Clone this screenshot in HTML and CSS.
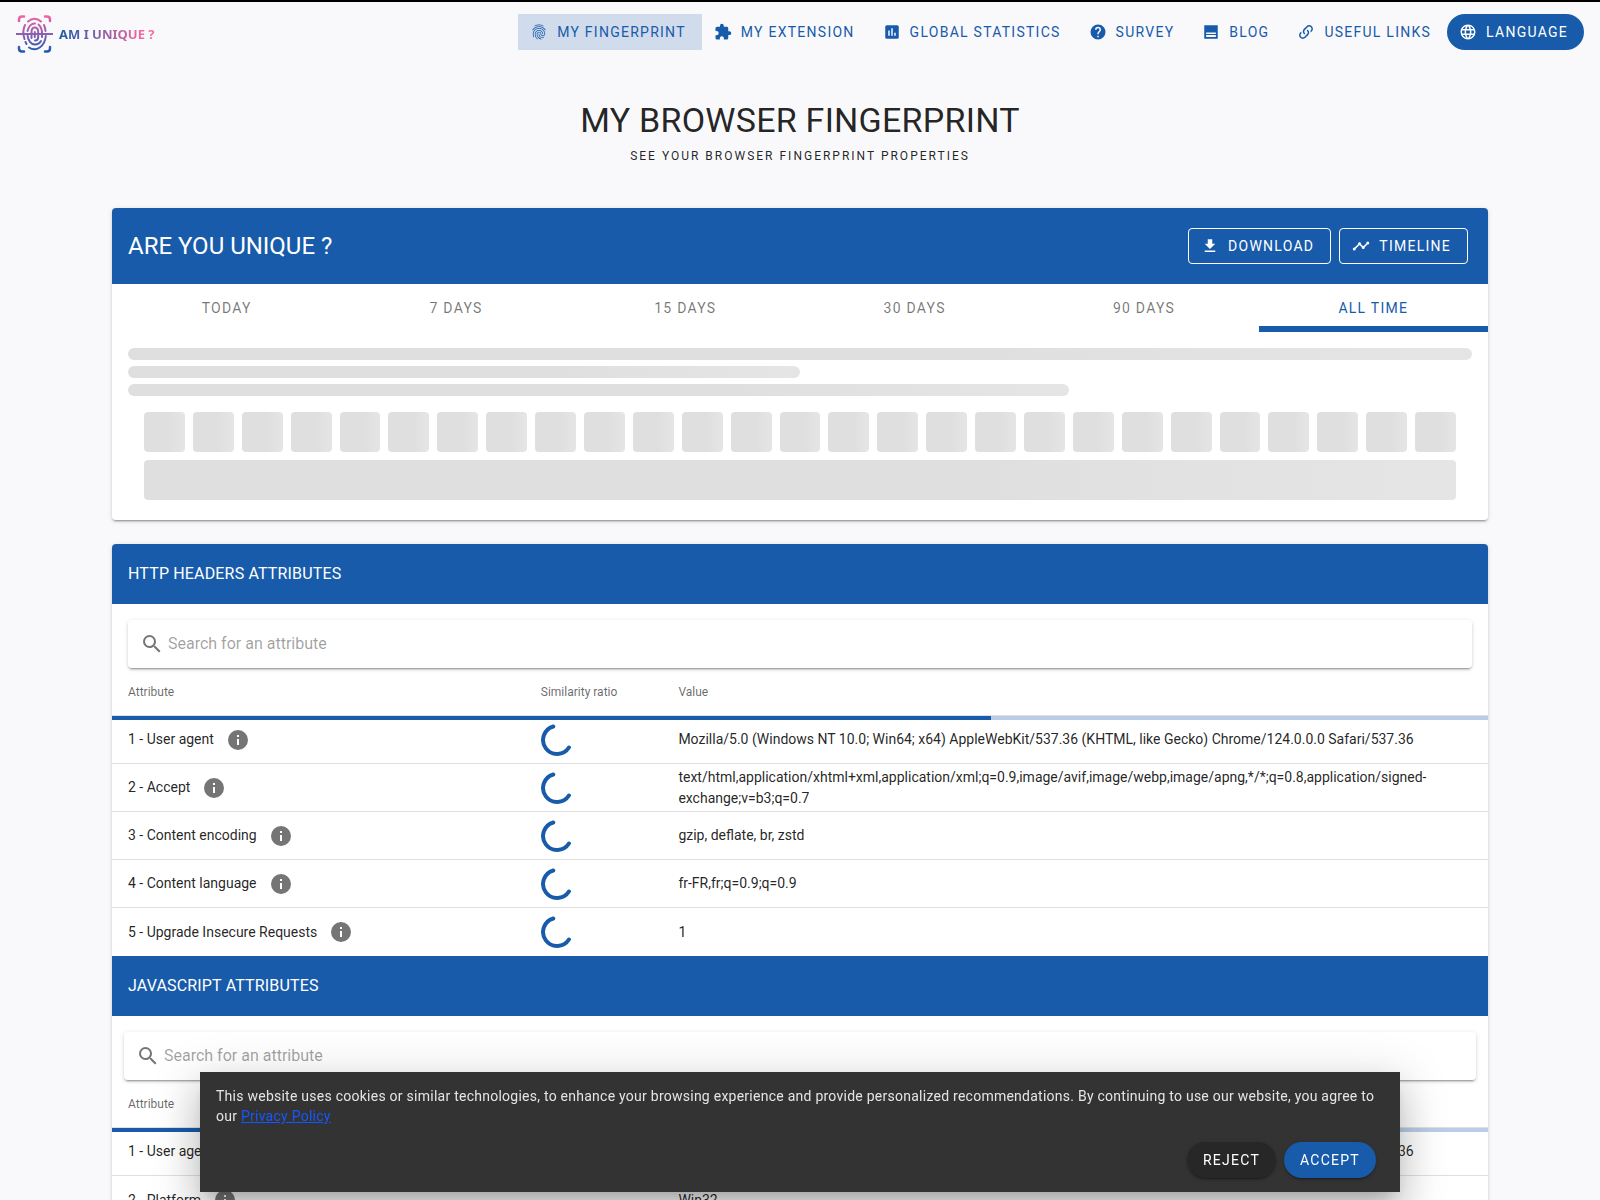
FILE: index.html
```html
<!DOCTYPE html>
<html lang="en">
<head>
<meta charset="utf-8">
<meta name="viewport" content="width=device-width, initial-scale=1">
<title>My browser fingerprint - Am I Unique ?</title>
<link rel="stylesheet" href="styles.css">
</head>
<body>
<svg class="sprite" aria-hidden="true">
  <symbol id="i-fingerprint" viewBox="0 0 24 24"><path d="M17.81,4.47C17.73,4.47 17.65,4.45 17.58,4.41C15.66,3.42 14,3 12,3C10.03,3 8.15,3.47 6.44,4.41C6.2,4.54 5.9,4.45 5.76,4.21C5.63,3.97 5.72,3.66 5.96,3.53C7.82,2.5 9.86,2 12,2C14.14,2 16,2.47 18.04,3.5C18.29,3.65 18.38,3.95 18.25,4.19C18.16,4.37 18,4.47 17.81,4.47M3.5,9.72C3.4,9.72 3.3,9.69 3.21,9.63C3,9.47 2.93,9.16 3.09,8.93C4.08,7.53 5.34,6.43 6.84,5.66C10,4.04 14,4.03 17.15,5.65C18.65,6.42 19.91,7.5 20.9,8.9C21.06,9.12 21,9.44 20.78,9.6C20.55,9.76 20.24,9.71 20.08,9.5C19.18,8.22 18.04,7.23 16.69,6.54C13.82,5.07 10.15,5.07 7.29,6.55C5.93,7.25 4.79,8.25 3.89,9.5C3.81,9.65 3.66,9.72 3.5,9.72M9.75,21.79C9.62,21.79 9.5,21.74 9.4,21.64C8.53,20.77 8.06,20.21 7.39,19C6.7,17.77 6.34,16.27 6.34,14.66C6.34,11.69 8.88,9.27 12,9.27C15.12,9.27 17.66,11.69 17.66,14.66A0.5,0.5 0 0,1 17.16,15.16A0.5,0.5 0 0,1 16.66,14.66C16.66,12.24 14.57,10.27 12,10.27C9.43,10.27 7.34,12.24 7.34,14.66C7.34,16.1 7.66,17.43 8.27,18.5C8.91,19.66 9.35,20.15 10.12,20.93C10.31,21.13 10.31,21.44 10.12,21.64C10,21.74 9.88,21.79 9.75,21.79M16.92,19.94C15.73,19.94 14.68,19.64 13.82,19.05C12.33,18.04 11.44,16.4 11.44,14.66A0.5,0.5 0 0,1 11.94,14.16A0.5,0.5 0 0,1 12.44,14.66C12.44,16.07 13.16,17.4 14.38,18.22C15.09,18.7 15.92,18.93 16.92,18.93C17.16,18.93 17.56,18.9 17.96,18.83C18.23,18.78 18.5,18.96 18.54,19.24C18.59,19.5 18.41,19.77 18.13,19.82C17.56,19.93 17.06,19.94 16.92,19.94M14.91,22C14.87,22 14.82,22 14.78,22C13.19,21.54 12.15,20.95 11.06,19.88C9.66,18.5 8.89,16.64 8.89,14.66C8.89,13.04 10.27,11.72 11.97,11.72C13.67,11.72 15.05,13.04 15.05,14.66C15.05,15.73 16,16.6 17.13,16.6C18.28,16.6 19.21,15.73 19.21,14.66C19.21,10.89 15.96,7.83 11.96,7.83C9.12,7.83 6.5,9.41 5.35,11.86C4.96,12.67 4.76,13.62 4.76,14.66C4.76,15.44 4.83,16.67 5.43,18.27C5.53,18.53 5.4,18.82 5.14,18.91C4.88,19 4.59,18.87 4.5,18.62C4,17.31 3.77,16 3.77,14.66C3.77,13.46 4,12.37 4.45,11.42C5.78,8.63 8.73,6.82 11.96,6.82C16.5,6.82 20.21,10.33 20.21,14.65C20.21,16.27 18.83,17.59 17.13,17.59C15.43,17.59 14.05,16.27 14.05,14.65C14.05,13.58 13.12,12.71 11.97,12.71C10.82,12.71 9.89,13.58 9.89,14.65C9.89,16.36 10.55,17.96 11.76,19.16C12.71,20.1 13.62,20.62 15.03,21C15.3,21.08 15.45,21.36 15.38,21.62C15.33,21.85 15.12,22 14.91,22Z"/></symbol>
  <symbol id="i-puzzle" viewBox="0 0 24 24"><path d="M20.5,11H19V7C19,5.89 18.1,5 17,5H13V3.5A2.5,2.5 0 0,0 10.5,1A2.5,2.5 0 0,0 8,3.5V5H4A2,2 0 0,0 2,7V10.8H3.5C5,10.8 6.2,12 6.2,13.5C6.2,15 5,16.2 3.5,16.2H2V20A2,2 0 0,0 4,22H7.8V20.5C7.8,19 9,17.8 10.5,17.8C12,17.8 13.2,19 13.2,20.5V22H17A2,2 0 0,0 19,20V16H20.5A2.5,2.5 0 0,0 23,13.5A2.5,2.5 0 0,0 20.5,11Z"/></symbol>
  <symbol id="i-chart" viewBox="0 0 24 24"><path d="M9,17H7V10H9V17M13,17H11V7H13V17M17,17H15V13H17V17M19,3H5A2,2 0 0,0 3,5V19A2,2 0 0,0 5,21H19A2,2 0 0,0 21,19V5A2,2 0 0,0 19,3Z" fill-rule="evenodd"/></symbol>
  <symbol id="i-help" viewBox="0 0 24 24"><path d="M15.07,11.25L14.17,12.17C13.45,12.89 13,13.5 13,15H11V14.5C11,13.39 11.45,12.39 12.17,11.67L13.41,10.41C13.78,10.05 14,9.55 14,9C14,7.89 13.1,7 12,7A2,2 0 0,0 10,9H8A4,4 0 0,1 12,5A4,4 0 0,1 16,9C16,9.88 15.64,10.67 15.07,11.25M13,19H11V17H13M12,2A10,10 0 0,0 2,12A10,10 0 0,0 12,22A10,10 0 0,0 22,12C22,6.47 17.5,2 12,2Z" fill-rule="evenodd"/></symbol>
  <symbol id="i-post" viewBox="0 0 24 24"><path d="M3,3H21V21H3ZM5.5,12.5V14.5H18.5V12.5ZM5.5,16V18.7H18.5V16Z" fill-rule="evenodd"/></symbol>
  <symbol id="i-link" viewBox="0 0 24 24"><path d="M10.59,13.41C11,13.8 11,14.44 10.59,14.83C10.2,15.22 9.56,15.22 9.17,14.83C7.22,12.88 7.22,9.71 9.17,7.76V7.76L12.71,4.22C14.66,2.27 17.83,2.27 19.78,4.22C21.73,6.17 21.73,9.34 19.78,11.29L18.29,12.78C18.3,11.96 18.17,11.14 17.89,10.36L18.36,9.88C19.54,8.71 19.54,6.81 18.36,5.64C17.19,4.46 15.29,4.46 14.12,5.64L10.59,9.17C9.41,10.34 9.41,12.24 10.59,13.41M13.41,9.17C13.8,8.78 14.44,8.78 14.83,9.17C16.78,11.12 16.78,14.29 14.83,16.24V16.24L11.29,19.78C9.34,21.73 6.17,21.73 4.22,19.78C2.27,17.83 2.27,14.66 4.22,12.71L5.71,11.22C5.7,12.04 5.83,12.86 6.11,13.65L5.64,14.12C4.46,15.29 4.46,17.19 5.64,18.36C6.81,19.54 8.71,19.54 9.88,18.36L13.41,14.83C14.59,13.66 14.59,11.76 13.41,10.59C13,10.2 13,9.56 13.41,9.17Z"/></symbol>
  <symbol id="i-web" viewBox="0 0 24 24"><path d="M16.36,14C16.44,13.34 16.5,12.68 16.5,12C16.5,11.32 16.44,10.66 16.36,10H19.74C19.9,10.64 20,11.31 20,12C20,12.69 19.9,13.36 19.74,14M14.59,19.56C15.19,18.45 15.65,17.25 15.97,16H18.92C17.96,17.65 16.43,18.93 14.59,19.56M14.34,14H9.66C9.56,13.34 9.5,12.68 9.5,12C9.5,11.32 9.56,10.65 9.66,10H14.34C14.43,10.65 14.5,11.32 14.5,12C14.5,12.68 14.43,13.34 14.34,14M12,19.96C11.17,18.76 10.5,17.43 10.09,16H13.91C13.5,17.43 12.83,18.76 12,19.96M8,8H5.08C6.03,6.34 7.57,5.06 9.4,4.44C8.8,5.55 8.35,6.75 8,8M5.08,16H8C8.35,17.25 8.8,18.45 9.4,19.56C7.57,18.93 6.03,17.65 5.08,16M4.26,14C4.1,13.36 4,12.69 4,12C4,11.31 4.1,10.64 4.26,10H7.64C7.56,10.66 7.5,11.32 7.5,12C7.5,12.68 7.56,13.34 7.64,14M12,4.03C12.83,5.23 13.5,6.57 13.91,8H10.09C10.5,6.57 11.17,5.23 12,4.03M18.92,8H15.97C15.65,6.75 15.19,5.55 14.59,4.44C16.43,5.07 17.96,6.34 18.92,8M12,2C6.47,2 2,6.5 2,12A10,10 0 0,0 12,22A10,10 0 0,0 22,12A10,10 0 0,0 12,2Z" fill-rule="evenodd"/></symbol>
  <symbol id="i-download" viewBox="0 0 24 24"><path d="M5,20H19V18H5M19,9H15V3H9V9H5L12,16L19,9Z"/></symbol>
  <symbol id="i-timeline" viewBox="0 0 24 24"><path d="M3,14L3.5,14.07L8.07,9.5C7.89,8.85 8.06,8.11 8.59,7.59C9.37,6.8 10.63,6.8 11.41,7.59C11.94,8.11 12.11,8.85 11.93,9.5L14.5,12.07L15,12C15.18,12 15.35,12 15.5,12.07L19.07,8.5C19,8.35 19,8.18 19,8A2,2 0 0,1 21,6A2,2 0 0,1 23,8A2,2 0 0,1 21,10C20.82,10 20.65,10 20.5,9.93L16.93,13.5C17,13.65 17,13.82 17,14A2,2 0 0,1 15,16A2,2 0 0,1 13,14L13.07,13.5L10.5,10.93C10.18,11 9.82,11 9.5,10.93L4.93,15.5L5,16A2,2 0 0,1 3,18A2,2 0 0,1 1,16A2,2 0 0,1 3,14Z"/></symbol>
  <symbol id="i-search" viewBox="0 0 24 24"><path d="M9.5,3A6.5,6.5 0 0,1 16,9.5C16,11.11 15.41,12.59 14.44,13.73L14.71,14H15.5L20.5,19L19,20.5L14,15.5V14.71L13.73,14.44C12.59,15.41 11.11,16 9.5,16A6.5,6.5 0 0,1 3,9.5A6.5,6.5 0 0,1 9.5,3M9.5,5C7,5 5,7 5,9.5C5,12 7,14 9.5,14C12,14 14,12 14,9.5C14,7 12,5 9.5,5Z" fill-rule="evenodd"/></symbol>
  <symbol id="i-info" viewBox="0 0 24 24"><path d="M13,9H11V7H13M13,17H11V11H13M12,2A10,10 0 0,0 2,12A10,10 0 0,0 12,22A10,10 0 0,0 22,12A10,10 0 0,0 12,2Z" fill-rule="evenodd"/></symbol>
  <symbol id="i-spinner" viewBox="0 0 32 32"><path d="M12.3,2.5A14,14 0 1,0 27.9,23.5" fill="none" stroke="currentColor" stroke-width="4" stroke-linecap="round"/></symbol>
</svg>

<header class="topbar">
  <a class="brand" href="#">
    <svg class="brand-mark" viewBox="0 0 38 38" aria-hidden="true">
      <defs><linearGradient id="brand-fill" x1="0" y1="0" x2="0" y2="38" gradientUnits="userSpaceOnUse"><stop offset="0" stop-color="#f5659f"/><stop offset=".5" stop-color="#8d5fb0"/><stop offset="1" stop-color="#175baa"/></linearGradient></defs>
      <g fill="none" stroke="url(#brand-fill)" stroke-width="2" stroke-linecap="round">
        <path stroke-width="2.5" d="M3,6V4.500Q3,1.500 6,1.500H8M29,1.500H31Q34,1.500 34,4.500V6M3,32V33.500Q3,36.500 6,36.500H8M29,36.500H31Q34,36.500 34,33.500V32"/>
        <path d="M12,6.500A11.500,15 0 0,1 25,6.500M9,10A11.500,15 0 0,0 8.500,24M28,10A11.500,15 0 0,1 29.500,16M29.800,21A11.500,15 0 0,1 13,32.500M9.500,27L10.500,29"/>
        <path d="M11.500,16A7.500,10.500 0 0,1 19,8.500M22.500,9.500A7.500,10.500 0 0,1 26,19V22M11.500,20A7.500,10.500 0 0,0 19,29.500Q23,29.500 25,26"/>
        <path d="M15.500,23V17Q15.500,12.500 18.800,12.500Q22.200,12.500 22.200,17V22Q22.200,25.500 19,25.500M18.800,17V22"/>
      </g>
      <rect x="0" y="18" width="37" height="2" fill="#8d5fb0"/>
    </svg>
    <span class="brand-name">AM I UNIQUE ?</span>
  </a>
  <nav class="nav">
    <a class="btn btn-nav is-active" href="#"><svg class="icon"><use href="#i-fingerprint"/></svg>My Fingerprint</a>
    <a class="btn btn-nav" href="#"><svg class="icon"><use href="#i-puzzle"/></svg>My Extension</a>
    <a class="btn btn-nav" href="#"><svg class="icon"><use href="#i-chart"/></svg>Global Statistics</a>
    <a class="btn btn-nav" href="#"><svg class="icon"><use href="#i-help"/></svg>Survey</a>
    <a class="btn btn-nav" href="#"><svg class="icon"><use href="#i-post"/></svg>Blog</a>
    <a class="btn btn-nav" href="#"><svg class="icon"><use href="#i-link"/></svg>Useful Links</a>
    <button class="btn btn-round btn-primary" type="button"><svg class="icon"><use href="#i-web"/></svg>Language</button>
  </nav>
</header>

<main class="page">
  <div class="intro">
    <h1 class="intro-title">MY BROWSER FINGERPRINT</h1>
    <p class="intro-sub">See your browser fingerprint properties</p>
  </div>

  <section class="card">
    <div class="card-head card-head-lg">
      <h2 class="card-title-lg">ARE YOU UNIQUE ?</h2>
      <div class="card-actions">
        <button class="btn btn-outlined" type="button"><svg class="icon"><use href="#i-download"/></svg>Download</button>
        <button class="btn btn-outlined" type="button"><svg class="icon"><use href="#i-timeline"/></svg>Timeline</button>
      </div>
    </div>
    <div class="tabs" role="tablist">
      <button class="tab" type="button" role="tab">Today</button>
      <button class="tab" type="button" role="tab">7 days</button>
      <button class="tab" type="button" role="tab">15 days</button>
      <button class="tab" type="button" role="tab">30 days</button>
      <button class="tab" type="button" role="tab">90 days</button>
      <button class="tab is-selected" type="button" role="tab" aria-selected="true">All time</button>
    </div>
    <div class="skeleton">
      <div class="bone bone-line"></div>
      <div class="bone bone-line bone-half"></div>
      <div class="bone bone-line bone-most"></div>
      <div class="bone-group">
        <div class="bone-row">
          <i class="bone"></i><i class="bone"></i><i class="bone"></i><i class="bone"></i><i class="bone"></i><i class="bone"></i><i class="bone"></i><i class="bone"></i><i class="bone"></i>
          <i class="bone"></i><i class="bone"></i><i class="bone"></i><i class="bone"></i><i class="bone"></i><i class="bone"></i><i class="bone"></i><i class="bone"></i><i class="bone"></i>
          <i class="bone"></i><i class="bone"></i><i class="bone"></i><i class="bone"></i><i class="bone"></i><i class="bone"></i><i class="bone"></i><i class="bone"></i><i class="bone"></i>
        </div>
        <div class="bone bone-block"></div>
      </div>
    </div>
  </section>

  <section class="card">
    <div class="card-head"><h2 class="card-title">HTTP HEADERS ATTRIBUTES</h2></div>
    <div class="search-area">
      <label class="search"><svg class="search-icon" aria-hidden="true"><use href="#i-search"/></svg><input type="text" placeholder="Search for an attribute" aria-label="Search for an attribute"></label>
    </div>
    <div class="table-wrap">
      <table class="attributes">
        <thead><tr><th class="col-name">Attribute</th><th class="col-ratio">Similarity ratio</th><th>Value</th></tr></thead>
        <tbody>
          <tr><td><span class="name">1 - User agent <svg class="info"><use href="#i-info"/></svg></span></td><td><svg class="spinner"><use href="#i-spinner"/></svg></td><td>Mozilla/5.0 (Windows NT 10.0; Win64; x64) AppleWebKit/537.36 (KHTML, like Gecko) Chrome/124.0.0.0 Safari/537.36</td></tr>
          <tr><td><span class="name">2 - Accept <svg class="info"><use href="#i-info"/></svg></span></td><td><svg class="spinner"><use href="#i-spinner"/></svg></td><td>text/html,application/xhtml+xml,application/xml;q=0.9,image/avif,image/webp,image/apng,*/*;q=0.8,application/signed-exchange;v=b3;q=0.7</td></tr>
          <tr><td><span class="name">3 - Content encoding <svg class="info"><use href="#i-info"/></svg></span></td><td><svg class="spinner"><use href="#i-spinner"/></svg></td><td>gzip, deflate, br, zstd</td></tr>
          <tr><td><span class="name">4 - Content language <svg class="info"><use href="#i-info"/></svg></span></td><td><svg class="spinner"><use href="#i-spinner"/></svg></td><td>fr-FR,fr;q=0.9;q=0.9</td></tr>
          <tr><td><span class="name">5 - Upgrade Insecure Requests <svg class="info"><use href="#i-info"/></svg></span></td><td><svg class="spinner"><use href="#i-spinner"/></svg></td><td>1</td></tr>
        </tbody>
      </table>
      <div class="loading" role="progressbar" aria-label="Loading"></div>
    </div>

    <div class="card-head card-head-inner"><h2 class="card-title">JAVASCRIPT ATTRIBUTES</h2></div>
    <div class="search-area search-area-wide">
      <label class="search"><svg class="search-icon" aria-hidden="true"><use href="#i-search"/></svg><input type="text" placeholder="Search for an attribute" aria-label="Search for an attribute"></label>
    </div>
    <div class="table-wrap">
      <table class="attributes">
        <thead><tr><th class="col-name">Attribute</th><th class="col-ratio">Similarity ratio</th><th>Value</th></tr></thead>
        <tbody>
          <tr><td><span class="name">1 - User agent <svg class="info"><use href="#i-info"/></svg></span></td><td><svg class="spinner"><use href="#i-spinner"/></svg></td><td>Mozilla/5.0 (Windows NT 10.0; Win64; x64) AppleWebKit/537.36 (KHTML, like Gecko) Chrome/124.0.0.0 Safari/537.36</td></tr>
          <tr><td><span class="name">2 - Platform <svg class="info"><use href="#i-info"/></svg></span></td><td></td><td>Win32</td></tr>
        </tbody>
      </table>
      <div class="loading" role="progressbar" aria-label="Loading"></div>
    </div>
  </section>
</main>

<aside class="cookies" aria-label="Cookies">
  <p class="cookies-text">This website uses cookies or similar technologies, to enhance your browsing experience and provide personalized recommendations. By continuing to use our website, you agree to our <a href="#">Privacy Policy</a></p>
  <div class="cookies-actions">
    <button class="btn btn-round btn-raised btn-dark" type="button">Reject</button>
    <button class="btn btn-round btn-raised btn-primary" type="button">Accept</button>
  </div>
</aside>
</body>
</html>
```
FILE: styles.css
```css
:root {
  --blue: #175baa;
  --ink: rgba(0, 0, 0, .87);
  --muted: rgba(0, 0, 0, .6);
  --line: rgba(0, 0, 0, .12);
  --shadow: 0 3px 1px -2px rgba(0, 0, 0, .2), 0 2px 2px 0 rgba(0, 0, 0, .14), 0 1px 5px 0 rgba(0, 0, 0, .12);
}

* { box-sizing: border-box; }

html { scrollbar-width: none; }

body {
  margin: 0;
  background: #f9f9fc;
  color: var(--ink);
  font: 400 16px/24px Roboto, sans-serif;
}

h1, h2, p { margin: 0; font-weight: 400; }
button, input { font-family: inherit; }

.sprite { display: none; }

.icon { width: 18px; height: 18px; margin: 0 9px 0 -4px; fill: currentColor; }

/* Buttons */
.btn {
  display: inline-flex;
  align-items: center;
  justify-content: center;
  height: 36px;
  padding: 0 16px;
  border: 0;
  background: none;
  font-size: 14px;
  letter-spacing: .09em;
  text-transform: uppercase;
  text-decoration: none;
  white-space: nowrap;
}
.btn-nav { color: var(--blue); }
.btn-nav.is-active { background: #d0dbec; }
.btn-round { border-radius: 18px; color: #fff; }
.btn-primary { background: var(--blue); }
.btn-dark { background: #272727; }
.btn-raised { box-shadow: var(--shadow); }
.btn-outlined { border: 1px solid #fff; border-radius: 4px; color: #fff; }

/* Top bar */
.topbar {
  display: flex;
  align-items: flex-start;
  justify-content: space-between;
  padding: 12px 16px 13px;
  border-top: 2px solid #000;
}
.brand { display: flex; align-items: center; gap: 5px; padding-top: 1px; text-decoration: none; }
.brand-mark { width: 38px; height: 38px; }
.brand-name {
  background: linear-gradient(90deg, #175baa 0%, #f5659f 85%);
  background-clip: text;
  color: transparent;
  font: 700 13px/20px "Noto Sans", sans-serif;
}
.nav { display: flex; }

/* Page */
.page { padding: 34px 7% 0; }
.intro { margin-bottom: 36px; text-align: center; }
.intro-title { font-size: 34px; line-height: 40px; letter-spacing: .007em; }
.intro-sub { font-size: 12px; line-height: 32px; letter-spacing: .167em; text-transform: uppercase; }

.card { margin-bottom: 24px; border-radius: 4px; background: #fff; box-shadow: var(--shadow); }
.card-head {
  display: flex;
  align-items: center;
  justify-content: space-between;
  height: 60px;
  padding: 0 20px 0 16px;
  border-radius: 4px 4px 0 0;
  background: var(--blue);
  color: #fff;
}
.card-head-lg { height: 76px; }
.card-head-inner { border-radius: 0; }
.card-title { font-size: 16px; line-height: 28px; letter-spacing: .01em; }
.card-title-lg { font-size: 24px; line-height: 32px; }
.card-actions { display: flex; gap: 8px; }

/* Tabs */
.tabs { display: flex; }
.tab {
  flex: 1;
  height: 48px;
  padding: 0 16px;
  border: 0;
  background: none;
  color: rgba(0, 0, 0, .54);
  font-size: 14px;
  letter-spacing: .09em;
  text-transform: uppercase;
}
.tab.is-selected { box-shadow: inset 0 -6px var(--blue); color: var(--blue); }

/* Loading placeholders */
.skeleton { display: flex; flex-direction: column; gap: 6px; padding: 16px 16px 20px; }
.bone { border-radius: 4px; background: linear-gradient(90deg, #dfdfdf 60%, #e5e5e5 100%); }
.bone-line { height: 12px; border-radius: 6px; }
.bone-half { width: 50%; }
.bone-most { width: 70%; }
.bone-group { display: flex; flex-direction: column; gap: 8px; padding: 10px 16px 0; }
.bone-row { display: flex; gap: 8px; }
.bone-row .bone { flex: 1; height: 40px; }
.bone-block { height: 40px; }

/* Search */
.search-area { padding: 16px 16px 0; }
.search-area-wide { padding: 16px 12px 0; }
.search {
  display: flex;
  align-items: center;
  gap: 4px;
  height: 48px;
  padding: 0 12px;
  border-radius: 4px;
  background: #fff;
  box-shadow: var(--shadow);
}
.search-icon { width: 24px; height: 24px; fill: rgba(0, 0, 0, .54); }
.search input { flex: 1; padding: 0 0 2px; border: 0; outline: 0; background: none; font-size: 16px; }
.search input::placeholder { color: rgba(0, 0, 0, .38); }

/* Attribute tables */
.table-wrap { position: relative; }
.attributes { width: 100%; border-spacing: 0; table-layout: fixed; }
.attributes th, .attributes td { height: 48px; padding: 0 16px; border-bottom: 1px solid var(--line); text-align: left; }
.attributes th { color: var(--muted); font-size: 12px; font-weight: 400; }
.attributes td { font-size: 14px; line-height: 21px; }
.attributes tr:last-child td { border-bottom: 0; }
.col-name { width: 30%; }
.col-ratio { width: 10%; }
.name { display: flex; align-items: center; gap: 12px; }
.info { width: 24px; height: 24px; fill: #757575; }
.spinner { display: block; width: 32px; height: 32px; color: var(--blue); }
.loading {
  position: absolute;
  top: 48px;
  left: 0;
  right: 0;
  height: 4px;
  background: linear-gradient(90deg, var(--blue) 63.9%, #b9cde6 63.9%);
}

/* Cookie notice */
.cookies {
  position: fixed;
  bottom: 8px;
  left: 12.5%;
  right: 12.5%;
  padding: 14px 24px 14px 16px;
  background: #333;
  color: rgba(255, 255, 255, .87);
  box-shadow: 0 11px 15px -7px rgba(0, 0, 0, .2), 0 24px 38px 3px rgba(0, 0, 0, .14), 0 9px 46px 8px rgba(0, 0, 0, .12);
}
.cookies-text { font-size: 14px; line-height: 20px; letter-spacing: .018em; }
.cookies-text a { color: #1557ff; }
.cookies-actions { display: flex; justify-content: flex-end; gap: 8px; padding-top: 16px; }
```
